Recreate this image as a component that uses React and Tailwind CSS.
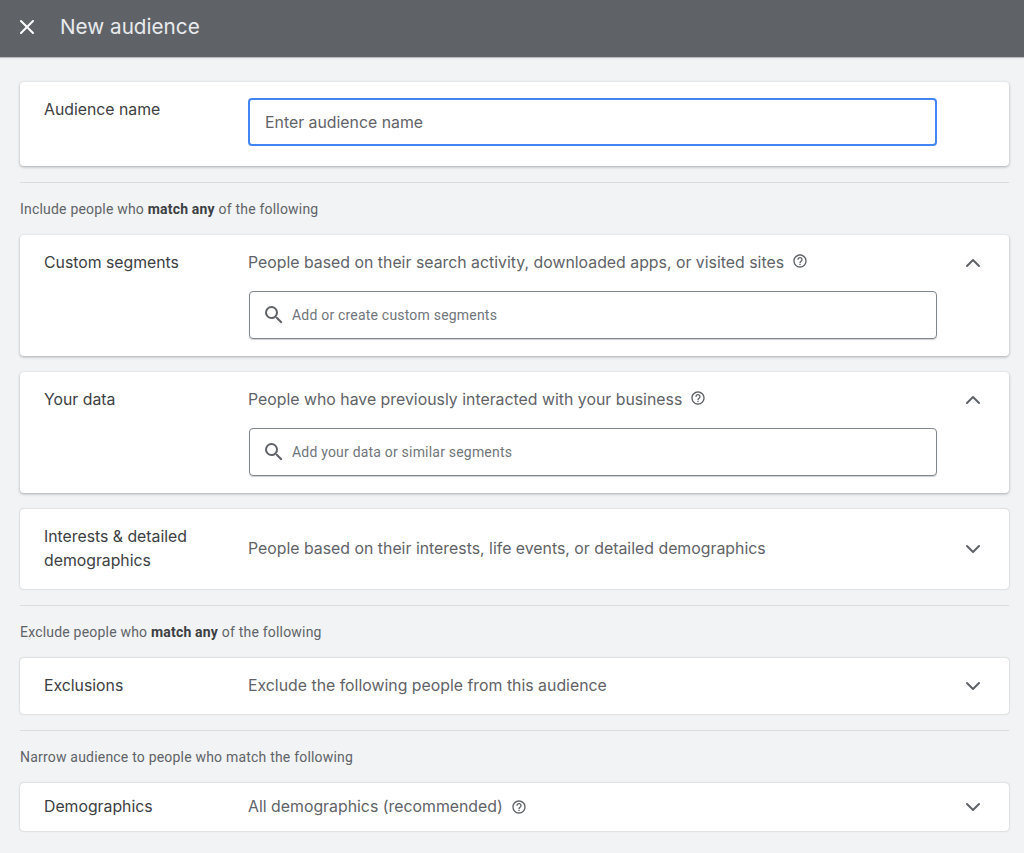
import { ChevronDown, ChevronUp, X } from 'lucide-react';

const HEAD = "font-['Inter',sans-serif]";
const BODY = "font-['Roboto',sans-serif]";

const Help = ({ raised }) => (
  <svg viewBox="0 0 24 24" className={`h-[16px] w-[16px] shrink-0 ${raised ? 'mb-[4px]' : ''}`} fill="#5f6368">
    <path d="M11 18h2v-2h-2v2zm1-16C6.48 2 2 6.48 2 12s4.48 10 10 10 10-4.48 10-10S17.52 2 12 2zm0 18c-4.41 0-8-3.59-8-8s3.59-8 8-8 8 3.59 8 8-3.59 8-8 8zm0-14c-2.21 0-4 1.79-4 4h2c0-1.1.9-2 2-2s2 .9 2 2c0 2-3 1.75-3 5h2c0-2.25 3-2.5 3-5 0-2.21-1.79-4-4-4z" />
  </svg>
);

const Search = () => (
  <svg viewBox="0 0 24 24" className="h-[24px] w-[24px] shrink-0" fill="#5f6368">
    <path d="M15.5 14h-.79l-.28-.27A6.471 6.471 0 0 0 16 9.5 6.5 6.5 0 1 0 9.5 16c1.61 0 3.09-.59 4.23-1.57l.27.28v.79l5 4.99L20.49 19l-4.99-5zm-6 0C7.01 14 5 11.99 5 9.5S7.01 5 9.5 5 14 7.01 14 9.5 11.99 14 9.5 14z" />
  </svg>
);

const SearchBox = ({ placeholder }) => (
  <div className="ml-[229px] mt-[16px] flex h-[48px] w-[688px] items-center rounded-[4px] border border-[#80868b] pl-[12px] shadow-[0_1px_1px_rgba(60,64,67,0.25)]">
    <Search />
    <span className={`${BODY} ml-[6px] text-[14px] tracking-[0.2px] text-[#70757a]`}>{placeholder}</span>
  </div>
);

const Section = ({ title, desc, help, open, height, box, rowClass, children }) => (
  <div className={`${height} rounded-[4px] bg-white ${open ? 'shadow-[0_1px_3px_rgba(60,64,67,0.4)]' : 'shadow-[0_0_2px_rgba(60,64,67,0.35)]'}`}>
    <div className={`flex items-center pl-[24px] pr-[24px] ${rowClass}`}>
      <div className={`${HEAD} w-[204px] shrink-0 text-[15.8px] font-normal leading-[24px] text-[#3c4043]`}>{children || title}</div>
      <div className={`${HEAD} flex items-center gap-[8px] text-[15.85px] leading-[24px] text-[#5f6368]`}>
        <span>{desc}</span>
        {help && <Help raised={open} />}
      </div>
      <div className="ml-auto flex w-[24px] justify-center">
        {open ? (
          <ChevronUp size={24} strokeWidth={2} color="#5f6368" />
        ) : (
          <ChevronDown size={24} strokeWidth={2} color="#5f6368" />
        )}
      </div>
    </div>
    {box && <SearchBox placeholder={box} />}
  </div>
);

const Divider = () => <div className="h-px bg-[#dadce0]" />;

const Caption = ({ children }) => (
  <p className={`${BODY} my-[16px] text-[14px] leading-[20px] tracking-[0.2px] text-[#5f6368]`}>{children}</p>
);

export default function App() {
  return (
    <div className="min-h-[853px] bg-[#f1f3f4]">
      <header className="flex h-[57px] items-center bg-[#5f6368] pb-[4px] pl-[15px] shadow-[0_1px_1px_rgba(60,64,67,0.3)]">
        <X size={24} strokeWidth={2} color="#ffffff" />
        <h1 className={`${HEAD} ml-[21px] text-[20.7px] font-normal text-[#e8eaed]`}>New audience</h1>
      </header>

      <main className="pl-[20px] pr-[15px] pt-[25px]">
        <div className="flex h-[84px] rounded-[4px] bg-white pl-[24px] pt-[16px] shadow-[0_1px_3px_rgba(60,64,67,0.4)]">
          <div className={`${HEAD} w-[204px] text-[15.8px] font-normal leading-[24px] text-[#3c4043]`}>Audience name</div>
          <div className={`${HEAD} flex h-[48px] w-[689px] items-center rounded-[4px] border-2 border-[#4285f4] pl-[15px] pt-[1px] text-[15.85px] text-[#5f6368]`}>
            Enter audience name
          </div>
        </div>

        <div className="mt-[16px]"><Divider /></div>
        <Caption>
          Include people who <b className="font-bold text-[#3c4043]">match any</b> of the following
        </Caption>

        <div className="flex flex-col gap-[16px]">
          <Section
            title="Custom segments"
            desc="People based on their search activity, downloaded apps, or visited sites"
            help
            open
            height="h-[121px]"
            rowClass="pt-[16px]"
            box="Add or create custom segments"
          />
          <Section
            title="Your data"
            desc="People who have previously interacted with your business"
            help
            open
            height="h-[121px]"
            rowClass="pt-[16px]"
            box="Add your data or similar segments"
          />
          <Section
            desc="People based on their interests, life events, or detailed demographics"
            height="h-[80px]"
            rowClass="h-[80px]"
          >
            Interests &amp; detailed<br />demographics
          </Section>
        </div>

        <div className="mt-[16px]"><Divider /></div>
        <Caption>
          Exclude people who <b className="font-bold text-[#3c4043]">match any</b> of the following
        </Caption>

        <Section
          title="Exclusions"
          desc="Exclude the following people from this audience"
          height="h-[56px]"
          rowClass="h-[56px]"
        />

        <div className="mt-[16px]"><Divider /></div>
        <Caption>Narrow audience to people who match the following</Caption>

        <Section
          title="Demographics"
          desc="All demographics (recommended)"
          help
          height="h-[48px]"
          rowClass="h-[48px]"
        />
      </main>
    </div>
  );
}
